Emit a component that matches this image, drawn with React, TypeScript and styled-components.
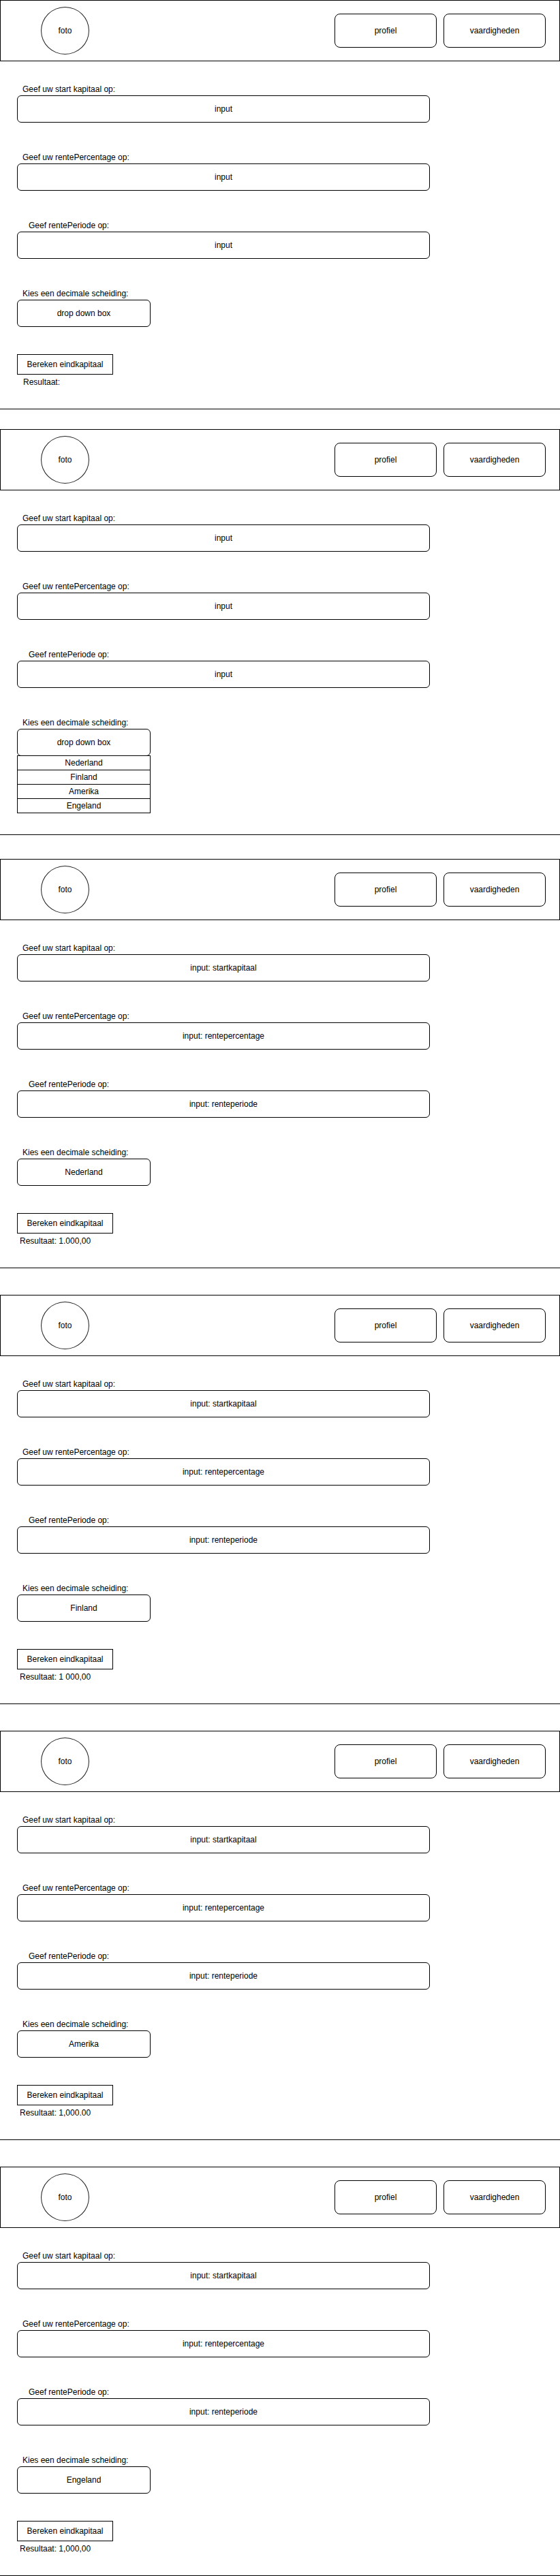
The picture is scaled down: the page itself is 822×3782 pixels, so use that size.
import React from 'react';
import styled, { createGlobalStyle } from 'styled-components';

const GlobalStyle = createGlobalStyle`
  html, body {
    margin: 0;
    padding: 0;
    background: #ffffff;
  }
  body {
    font-family: "Liberation Sans", Arial, sans-serif;
    font-size: 12px;
    color: #000;
  }
`;

const Page = styled.main`
  width: 822px;
`;

const Panel = styled.section`
  display: flex;
  flex-direction: column;
`;

const Header = styled.header`
  height: 90px;
  box-sizing: border-box;
  border: 1px solid #000;
  display: flex;
  align-items: center;
  padding: 0 20px 0 59px;
`;

const Photo = styled.div`
  width: 71px;
  height: 70px;
  box-sizing: border-box;
  border: 1px solid #222;
  border-radius: 50%;
  display: flex;
  align-items: center;
  justify-content: center;
`;

const Nav = styled.nav`
  margin-left: auto;
  display: flex;
  gap: 10px;
`;

const NavButton = styled.div`
  width: 150px;
  height: 50px;
  box-sizing: border-box;
  border: 1px solid #000;
  border-radius: 8px;
  display: flex;
  align-items: center;
  justify-content: center;
`;

const Form = styled.div`
  display: flex;
  flex-direction: column;
  gap: 42px;
  padding: 32px 0 0 25px;
`;

const Field = styled.div`
  display: flex;
  flex-direction: column;
`;

const Label = styled.div<{ $indent: number }>`
  height: 18px;
  line-height: 18px;
  padding-left: ${(p) => p.$indent}px;
`;

const Box = styled.div<{ $width: number }>`
  width: ${(p) => p.$width}px;
  height: 40px;
  box-sizing: border-box;
  border: 1px solid #000;
  border-radius: 6px;
  display: flex;
  align-items: center;
  justify-content: center;
`;

const OptionList = styled.div`
  width: 196px;
  display: flex;
  flex-direction: column;
`;

// each row shares its top border with the row above
const Option = styled.div`
  height: 22px;
  box-sizing: border-box;
  border: 1px solid #000;
  margin-top: -1px;
  display: flex;
  align-items: center;
  justify-content: center;
`;

const Actions = styled.div`
  display: flex;
  flex-direction: column;
  align-items: flex-start;
  padding-left: 25px;
  margin-top: 40px;
`;

const CalcButton = styled.div`
  width: 141px;
  height: 30px;
  box-sizing: border-box;
  border: 1px solid #000;
  display: flex;
  align-items: center;
  justify-content: center;
`;

const Result = styled.div<{ $indent: number }>`
  margin-top: 3px;
  line-height: 16px;
  padding-left: ${(p) => p.$indent}px;
`;

const Separator = styled.hr<{ $gap: number }>`
  border: none;
  height: 1px;
  background: #000;
  margin: 31px 0 ${(p) => Math.max(p.$gap - 1, 0)}px 0;
`;

interface PanelData {
  inputs: string[];
  choice: string;
  open?: boolean;
  result?: string;
  resultIndent?: number;
  gap: number;
}

const labels = [
  { text: 'Geef uw start kapitaal op:', indent: 8 },
  { text: 'Geef uw rentePercentage op:', indent: 8 },
  { text: 'Geef rentePeriode op:', indent: 17 },
];

const countries = ['Nederland', 'Finland', 'Amerika', 'Engeland'];

const filled = ['input: startkapitaal', 'input: rentepercentage', 'input: renteperiode'];

const panels: PanelData[] = [
  { inputs: ['input', 'input', 'input'], choice: 'drop down box', result: 'Resultaat:', resultIndent: 9, gap: 30 },
  { inputs: ['input', 'input', 'input'], choice: 'drop down box', open: true, gap: 36 },
  { inputs: filled, choice: 'Nederland', result: 'Resultaat: 1.000,00', resultIndent: 4, gap: 40 },
  { inputs: filled, choice: 'Finland', result: 'Resultaat: 1 000,00', resultIndent: 4, gap: 40 },
  { inputs: filled, choice: 'Amerika', result: 'Resultaat: 1,000.00', resultIndent: 4, gap: 40 },
  { inputs: filled, choice: 'Engeland', result: 'Resultaat: 1,000,00', resultIndent: 4, gap: 0 },
];

const CalculatorPanel: React.FC<{ data: PanelData }> = ({ data }) => (
  <Panel>
    <Header>
      <Photo>foto</Photo>
      <Nav>
        <NavButton>profiel</NavButton>
        <NavButton>vaardigheden</NavButton>
      </Nav>
    </Header>

    <Form>
      {labels.map((l, i) => (
        <Field key={l.text}>
          <Label $indent={l.indent}>{l.text}</Label>
          <Box $width={606}>{data.inputs[i]}</Box>
        </Field>
      ))}
      <Field>
        <Label $indent={8}>Kies een decimale scheiding:</Label>
        <Box $width={196}>{data.choice}</Box>
        {data.open && (
          <OptionList>
            {countries.map((c) => (
              <Option key={c}>{c}</Option>
            ))}
          </OptionList>
        )}
      </Field>
    </Form>

    {data.result && (
      <Actions>
        <CalcButton>Bereken eindkapitaal</CalcButton>
        <Result $indent={data.resultIndent ?? 4}>{data.result}</Result>
      </Actions>
    )}

    <Separator $gap={data.gap} />
  </Panel>
);

const App: React.FC = () => (
  <Page>
    <GlobalStyle />
    {panels.map((p, i) => (
      <CalculatorPanel key={i} data={p} />
    ))}
  </Page>
);

export default App;
